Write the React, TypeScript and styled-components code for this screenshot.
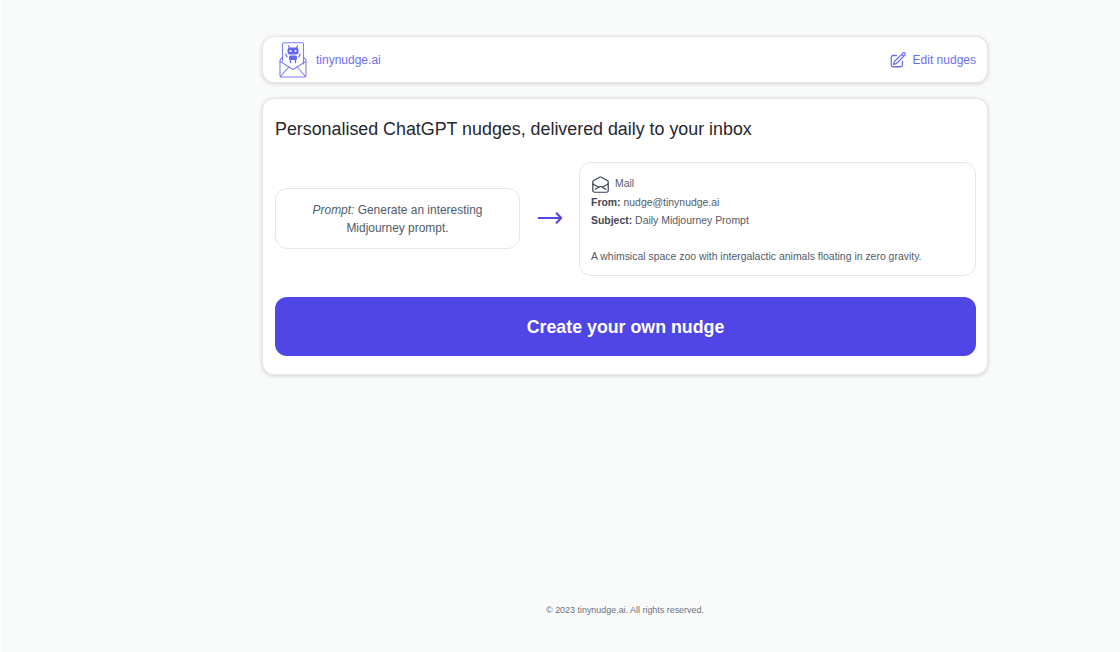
import React from 'react'
import styled, { createGlobalStyle } from 'styled-components'

const GlobalStyle = createGlobalStyle`
    html, body {
        margin: 0;
        padding: 0;
        background: #f9fbfa;
        font-family: "Liberation Sans", Arial, sans-serif;
    }
    * {
        box-sizing: border-box;
    }
`;

const Page = styled.div`
    display: flex;
    flex-direction: column;
    align-items: center;
    height: 652px;
    padding: 36px 132px 0 261px;
    background: #f9fbfa;
    border-left: 1px solid #fdfefe;
`;

const Panel = styled.div`
    width: 726px;
    background: #fff;
    border: 1px solid #e5e7eb;
    border-radius: 12px;
    box-shadow: 0 1px 4px rgba(0, 0, 0, 0.16);
`;

const TopBar = styled(Panel)`
    display: flex;
    justify-content: space-between;
    align-items: center;
    height: 47px;
    padding: 0 11px 0 16px;
`;

const Brand = styled.a`
    display: flex;
    align-items: center;
    gap: 9px;
    color: #6d6ff2;
    font-size: 12px;
`;

const EditLink = styled.a`
    display: flex;
    align-items: center;
    gap: 6px;
    color: #6d6ff2;
    font-size: 12px;
`;

const HeroCard = styled(Panel)`
    margin-top: 15px;
    height: 277px;
    padding: 18px 11px 18px 12px;
`;

const Title = styled.h1`
    margin: 0;
    color: #27272f;
    font-size: 17.85px;
    font-weight: 400;
    line-height: 24px;
`;

const Demo = styled.div`
    display: flex;
    align-items: center;
    justify-content: space-between;
    margin-top: 21px;
`;

const Bubble = styled.div`
    background: #fff;
    border: 1px solid #e5e7eb;
    border-radius: 12px;
    color: #525b69;
`;

const PromptBox = styled(Bubble)`
    width: 245px;
    margin-bottom: 1px;
    padding: 12px 16px 11px;
    font-size: 11.95px;
    line-height: 18px;
    text-align: center;
`;

const ArrowSlot = styled.div`
    display: flex;
    justify-content: center;
    width: 59px;
    margin-bottom: 2px;
    color: #4f46e5;
`;

const MailBox = styled(Bubble)`
    width: 397px;
    height: 114px;
    padding: 11px;
    font-size: 10.45px;
    line-height: 18px;
`;

const MailHead = styled.div`
    display: flex;
    align-items: center;
    gap: 5px;
    height: 20px;
`;

const Strong = styled.b`
    color: #3f4754;
`;

const Preview = styled.div`
    margin-top: 18px;
`;

const CreateButton = styled.button`
    display: block;
    width: 100%;
    height: 59px;
    margin-top: 21px;
    padding: 1px 0 0;
    background: #4f46e5;
    border: none;
    border-radius: 12px;
    color: #fff;
    font-family: inherit;
    font-size: 17.8px;
    font-weight: 700;
`;

const Footer = styled.footer`
    width: 726px;
    margin-top: auto;
    padding-bottom: 36px;
    color: #6b7280;
    font-size: 8.93px;
    line-height: 12px;
    text-align: center;
`;

const LogoIcon = () => (
    <svg width="28" height="36" viewBox="0 0 28 36" fill="none" stroke="#7c7ef3" strokeWidth="1.100" strokeLinejoin="round" strokeLinecap="round">
        <path d="M3.500 19 V2 A1.500 1.500 0 0 1 5 0.800 H23 A1.500 1.500 0 0 1 24.500 2 V22" />
        <path d="M3.500 15.500 L1.600 17.200 A2 2 0 0 0 1 18.800 V33 A2 2 0 0 0 3 35 H25 A2 2 0 0 0 27 33 V18.800 A2 2 0 0 0 26.400 17.200 L24.500 15.500" />
        <path d="M1.300 19.500 L14 27.500 L26.700 19.500" />
        <path d="M1.800 34 L10 25 M26.200 34 L18 25" />
        <g stroke="#6366f1" strokeWidth="1.200">
            <path d="M10.500 6 L9.500 3.800 M17.500 6 L18.500 3.800" />
            <path d="M8 15 L6.800 12 M20 15 L21.200 12" />
        </g>
        <rect x="8.500" y="5.500" width="11" height="7" rx="2.500" fill="#6366f1" stroke="none" />
        <circle cx="11.500" cy="9" r="1.100" fill="#fff" stroke="none" />
        <circle cx="16.500" cy="9" r="1.100" fill="#fff" stroke="none" />
        <rect x="10" y="13.500" width="8" height="4.500" rx="1.500" fill="#6366f1" stroke="none" />
        <path d="M11.500 18 V20.500 M16.500 18 V20.500" stroke="#6366f1" strokeWidth="1.300" />
    </svg>
);

const EditIcon = () => (
    <svg width="18" height="18" viewBox="0 0 24 24" fill="none" stroke="currentColor" strokeWidth="1.700" strokeLinecap="round" strokeLinejoin="round">
        <path d="M16.862 4.487l1.687-1.688a1.875 1.875 0 112.652 2.652L10.582 16.07a4.5 4.5 0 01-1.897 1.13L6 18l.8-2.685a4.5 4.5 0 011.13-1.897l8.932-8.931zm0 0L19.500 7.125M18 14v4.750A2.250 2.250 0 0115.750 21H5.250A2.250 2.250 0 013 18.750V8.250A2.250 2.250 0 015.250 6H10" />
    </svg>
);

const ArrowIcon = () => (
    <svg width="30" height="30" viewBox="0 0 24 24" fill="none" stroke="currentColor" strokeWidth="1.600" strokeLinecap="round" strokeLinejoin="round">
        <path d="M17.250 8.250L21 12m0 0l-3.750 3.750M21 12H3" />
    </svg>
);

const OpenMailIcon = () => (
    <svg width="19" height="19" viewBox="0 0 24 24" fill="none" stroke="#374151" strokeWidth="1.500" strokeLinecap="round" strokeLinejoin="round">
        <path d="M21.750 9v.906a2.250 2.250 0 01-1.183 1.981l-6.478 3.488M2.250 9v.906a2.250 2.250 0 001.183 1.981l6.478 3.488m8.839 2.510l-4.660-2.510m0 0l-1.023-.550a2.250 2.250 0 00-2.134 0l-1.022.550m0 0l-4.661 2.510m16.500 1.615a2.250 2.250 0 01-2.250 2.250h-15a2.250 2.250 0 01-2.250-2.250V8.844a2.250 2.250 0 011.183-1.980l7.500-4.040a2.250 2.250 0 012.134 0l7.500 4.040a2.250 2.250 0 011.183 1.980V18z" />
    </svg>
);

const App: React.FC = () => {
    return (
        <Page>
            <GlobalStyle />
            <TopBar>
                <Brand>
                    <LogoIcon />
                    tinynudge.ai
                </Brand>
                <EditLink>
                    <EditIcon />
                    Edit nudges
                </EditLink>
            </TopBar>
            <HeroCard>
                <Title>Personalised ChatGPT nudges, delivered daily to your inbox</Title>
                <Demo>
                    <PromptBox>
                        <em>Prompt:</em> Generate an interesting Midjourney prompt.
                    </PromptBox>
                    <ArrowSlot>
                        <ArrowIcon />
                    </ArrowSlot>
                    <MailBox>
                        <MailHead>
                            <OpenMailIcon />
                            Mail
                        </MailHead>
                        <div><Strong>From:</Strong> nudge@tinynudge.ai</div>
                        <div><Strong>Subject:</Strong> Daily Midjourney Prompt</div>
                        <Preview>A whimsical space zoo with intergalactic animals floating in zero gravity.</Preview>
                    </MailBox>
                </Demo>
                <CreateButton>Create your own nudge</CreateButton>
            </HeroCard>
            <Footer>© 2023 tinynudge.ai. All rights reserved.</Footer>
        </Page>
    )
}

export default App
